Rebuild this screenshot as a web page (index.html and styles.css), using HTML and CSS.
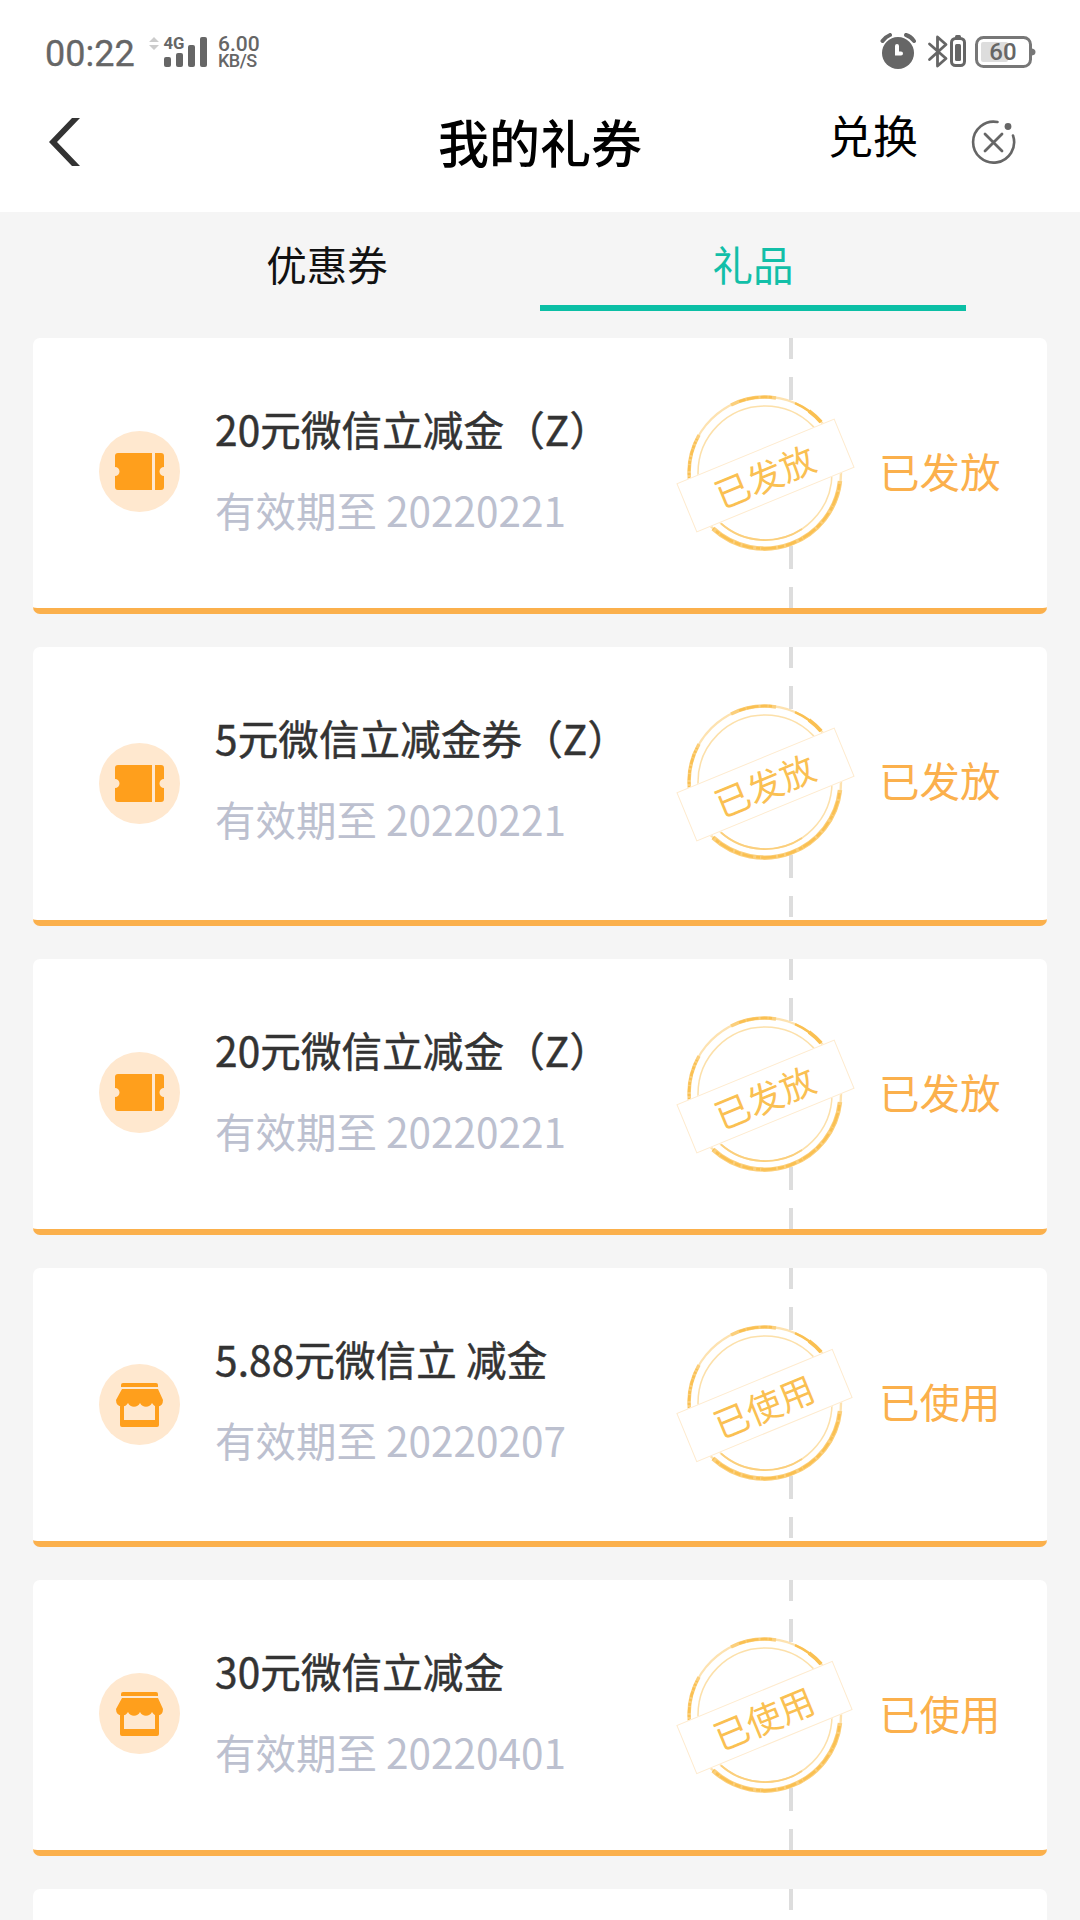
FILE: index.html
```html
<!DOCTYPE html>
<html lang="zh-CN">
<head>
<meta charset="utf-8">
<title>我的礼券</title>
<link rel="stylesheet" href="styles.css">
</head>
<body>
<svg class="defs" width="0" height="0" aria-hidden="true">
  <symbol id="ticket" viewBox="0 0 81 81">
    <circle cx="40.500" cy="40.500" r="40.500" fill="#ffe8cf"/>
    <path fill="#ff9f1c" d="M19 22H53V59H19Q16 59 16 56V45A4.500 4.500 0 0 0 16 36V25Q16 22 19 22ZM56 22H62Q65 22 65 25V36A4.500 4.500 0 0 0 65 45V56Q65 59 62 59H56Z"/>
  </symbol>
  <symbol id="shop" viewBox="0 0 81 81">
    <circle cx="40.500" cy="40.500" r="40.500" fill="#ffe8cf"/>
    <path fill="#ff9f1c" d="M24 19H57Q59 19 59 21V23H22V21Q22 19 24 19ZM23 25H59L64 36Q64 42 58.500 42.500Q55 42.500 53 39Q51 42.800 47 42.800T41 39Q39 42.800 35 42.800T29 39Q27 42.500 23 42.500Q17 42 17 36ZM21 42H25V56H56V42H60V61Q60 63 58 63H23Q21 63 21 61Z"/>
  </symbol>
  <symbol id="ring" viewBox="0 0 190 170">
    <circle cx="94" cy="84" r="76" fill="#fff"/>
    <g fill="none" stroke="#fbcf7c">
      <circle cx="94" cy="84" r="76" stroke-width="2.400" opacity=".6"/>
      <circle cx="94" cy="84" r="67" stroke-width="1.500" opacity=".65"/>
      <path stroke-width="4.500" d="M169 92A76 76 0 0 1 42 139.500"/>
      <path stroke-width="3.500" d="M19 95A76 76 0 0 1 28 46M60 16A76 76 0 0 1 105 9"/>
      <path stroke-width="1.800" d="M131 140A67 67 0 0 1 50 134.500"/>
    </g>
    <g fill="none" stroke="#fac052">
      <path stroke-width="2.400" d="M68 12.600A76 76 0 0 1 101 8.300" stroke-dasharray="7 1 12 2"/>
      <path stroke-width="2.500" d="M124 14.200A76 76 0 0 1 150 33"/>
      <path stroke-width="4" d="M138 22A76 76 0 0 1 150 33"/>
      <path stroke-width="2.600" d="M168.500 95A76 76 0 0 1 42 139.500" stroke-dasharray="6 2 15 1 4 3 11 2"/>
      <path stroke-width="2.600" d="M18.400 91A76 76 0 0 1 26 50" stroke-dasharray="3 2 2 2 6 1"/>
    </g>
  </symbol>
</svg>

<header class="top">
  <div class="status">
    <span class="clock">00:22</span>
    <svg class="signal" width="60" height="34" viewBox="0 0 60 34">
      <path fill="#ccc" d="M0 8 5 3 10 8ZM0 11H10L5 16Z"/>
      <g fill="#666"><rect x="15" y="23" width="7" height="10" rx="2"/><rect x="27" y="19" width="7" height="14" rx="2"/><rect x="39" y="11" width="7" height="22" rx="2"/><rect x="51" y="3" width="7" height="30" rx="2"/></g>
      <text class="net" x="14.500" y="15" textLength="21" lengthAdjust="spacingAndGlyphs">4G</text>
    </svg>
    <div class="speed"><span class="rate">6.00</span><span class="unit">KB/S</span></div>
    <svg class="tray" width="160" height="40" viewBox="0 0 160 40">
      <circle cx="18" cy="20" r="16" fill="#666"/>
      <path d="M2.500 8Q6 3.500 10 2M26 2Q31 3.500 34 8" fill="none" stroke="#666" stroke-width="4" stroke-linecap="round"/>
      <path d="M17 13V20.500H21" fill="none" stroke="#fff" stroke-width="4" stroke-linecap="round"/>
      <path d="M49.500 11 66 25.500 57.500 33V4L66 11.500 49.500 26.500" fill="none" stroke="#666" stroke-width="2.800" stroke-linecap="round" stroke-linejoin="round"/>
      <rect x="71.500" y="5.500" width="13" height="27" rx="4" fill="none" stroke="#666" stroke-width="3"/>
      <rect x="75" y="2" width="6" height="4" rx="1.500" fill="#666"/><rect x="75" y="11" width="6" height="17" rx="1.500" fill="#666"/>
      <rect x="96.500" y="4.500" width="54" height="29" rx="7" fill="none" stroke="#777" stroke-width="3"/>
      <rect x="101" y="9" width="27" height="20" rx="2" fill="#ddd"/>
      <path d="M152 15.500Q155.500 16 155.500 19T152 22.500Z" fill="#777"/>
      <text class="level" x="123" y="27">60</text>
    </svg>
  </div>
  <nav class="bar">
    <svg class="back" width="34" height="50" viewBox="0 0 34 50"><path fill="#333" d="M24 1H32L9 25 32 49H24L1 25Z"/></svg>
    <h1>我的礼券</h1>
    <div class="actions">
      <span class="redeem">兑换</span>
      <svg width="46" height="46" viewBox="0 0 46 46"><path d="M26.500 3A20.500 20.500 0 1 0 42 16.500" fill="none" stroke="#666" stroke-width="2.600" stroke-linecap="round"/><circle cx="37" cy="7.500" r="3.400" fill="#666"/><path d="M14 15 31 32M31 15 14 32" stroke="#666" stroke-width="2.800" stroke-linecap="round"/></svg>
    </div>
  </nav>
</header>

<div class="tabs"><span class="tab">优惠券</span><span class="tab active">礼品</span></div>

<main class="list">
  <article class="card">
    <svg class="badge"><use href="#ticket"/></svg>
    <div class="info"><h2>20元微信立减金（Z）</h2><p>有效期至 20220221</p></div>
    <div class="divider"></div>
    <div class="stamp"><svg><use href="#ring"/></svg><span>已发放</span></div>
    <div class="state">已发放</div>
  </article>
  <article class="card tall">
    <svg class="badge"><use href="#ticket"/></svg>
    <div class="info"><h2>5元微信立减金券（Z）</h2><p>有效期至 20220221</p></div>
    <div class="divider"></div>
    <div class="stamp"><svg><use href="#ring"/></svg><span>已发放</span></div>
    <div class="state">已发放</div>
  </article>
  <article class="card">
    <svg class="badge"><use href="#ticket"/></svg>
    <div class="info"><h2>20元微信立减金（Z）</h2><p>有效期至 20220221</p></div>
    <div class="divider"></div>
    <div class="stamp"><svg><use href="#ring"/></svg><span>已发放</span></div>
    <div class="state">已发放</div>
  </article>
  <article class="card tall">
    <svg class="badge"><use href="#shop"/></svg>
    <div class="info"><h2>5.88元微信立 减金</h2><p>有效期至 20220207</p></div>
    <div class="divider"></div>
    <div class="stamp used"><svg><use href="#ring"/></svg><span>已使用</span></div>
    <div class="state">已使用</div>
  </article>
  <article class="card">
    <svg class="badge"><use href="#shop"/></svg>
    <div class="info"><h2>30元微信立减金</h2><p>有效期至 20220401</p></div>
    <div class="divider"></div>
    <div class="stamp used"><svg><use href="#ring"/></svg><span>已使用</span></div>
    <div class="state">已使用</div>
  </article>
  <article class="card peek"><div class="divider"></div></article>
</main>
</body>
</html>
```
FILE: styles.css
```css
* { box-sizing: border-box; margin: 0; padding: 0; }

body {
  width: 1080px;
  height: 1920px;
  overflow: hidden;
  background: #f5f5f5;
  font-family: "Noto Sans CJK SC", sans-serif;
  color: #333;
}

svg { display: block; flex: none; }
.defs { position: absolute; }

.top { height: 212px; background: #fff; }

.status {
  display: flex;
  height: 104px;
  padding: 33px 40px 0 45px;
  font-family: Roboto, sans-serif;
  color: #666;
}
.clock {
  width: 104px;
  font-size: 36px;
  line-height: 42px;
  -webkit-text-stroke: 0.300px #666;
}
.signal { margin-top: 1px; }
.net { font: 700 17px Roboto, sans-serif; fill: #666; }
.speed {
  display: flex;
  flex-direction: column;
  margin: 2px 0 0 9px;
  font-weight: 500;
}
.rate { font-size: 21px; line-height: 18px; }
.unit { font-size: 18px; line-height: 16px; letter-spacing: -0.500px; }
.tray { margin-left: auto; }
.level { font: 500 24px Roboto, sans-serif; fill: #666; text-anchor: middle; }

.bar {
  display: grid;
  grid-template-columns: 1fr auto 1fr;
  align-items: center;
  height: 76px;
  padding: 0 48px;
}
h1 {
  font-size: 51px;
  font-weight: 500;
  line-height: 76px;
  color: #000;
  transform: translateY(-1px);
}
.actions { display: flex; align-items: center; justify-content: flex-end; gap: 53px; padding-right: 15px; }
.redeem { font-size: 45px; line-height: 60px; color: #000; margin-bottom: 14px; }

.tabs { display: flex; height: 126px; padding: 0 114px; }
.tab {
  flex: 1;
  height: 99px;
  line-height: 104px;
  font-size: 40.500px;
  text-align: center;
  color: #111;
}
.tab.active { color: #12bfa8; border-bottom: 6px solid #0bbfa5; }

.list { display: flex; flex-direction: column; gap: 33px; padding: 0 33px; }

.card {
  position: relative;
  display: flex;
  flex: none;
  height: 276px;
  background: #fff;
  border-bottom: 6px solid #fbb04c;
  border-radius: 7px;
}
.card.tall { height: 279px; }
.card.peek { height: 31px; border-bottom: 0; border-radius: 7px 7px 0 0; overflow: hidden; }

.badge { width: 81px; height: 81px; margin: 93px 0 0 66px; }
.tall .badge { margin-top: 96px; }
.info { flex: none; width: 609px; padding: 61px 0 0 35px; }
h2, .info p { font-size: 40.500px; line-height: 60px; font-weight: 400; white-space: nowrap; }
h2 { letter-spacing: 0.150px; -webkit-text-stroke: 0.500px #333; }
.info p { margin-top: 21px; color: #bcc0cf; }

.divider {
  flex: none;
  width: 4px;
  height: 270px;
  background: linear-gradient(#ddd 0 21px, #fff 21px 39px, #ddd 39px 62px, #fff 62px 208px, #ddd 208px 231px, #fff 231px 249px, #ddd 249px);
}
.peek .divider { margin-left: 756px; }

.stamp { position: absolute; left: 638px; top: 51px; width: 190px; height: 170px; }
.stamp svg { width: 190px; height: 170px; }
.stamp span {
  position: absolute;
  left: 9px;
  top: 60px;
  width: 171px;
  height: 53px;
  border: 1px solid #feebcf;
  background: #fff;
  font-size: 35px;
  line-height: 50px;
  text-align: center;
  text-indent: -2px;
  color: #fac052;
  transform: rotate(-22.400deg);
}
.stamp.used span { width: 169px; }

.state { margin-left: 86px; padding-top: 103px; font-size: 40.500px; line-height: 60px; color: #fbb04c; }
```
